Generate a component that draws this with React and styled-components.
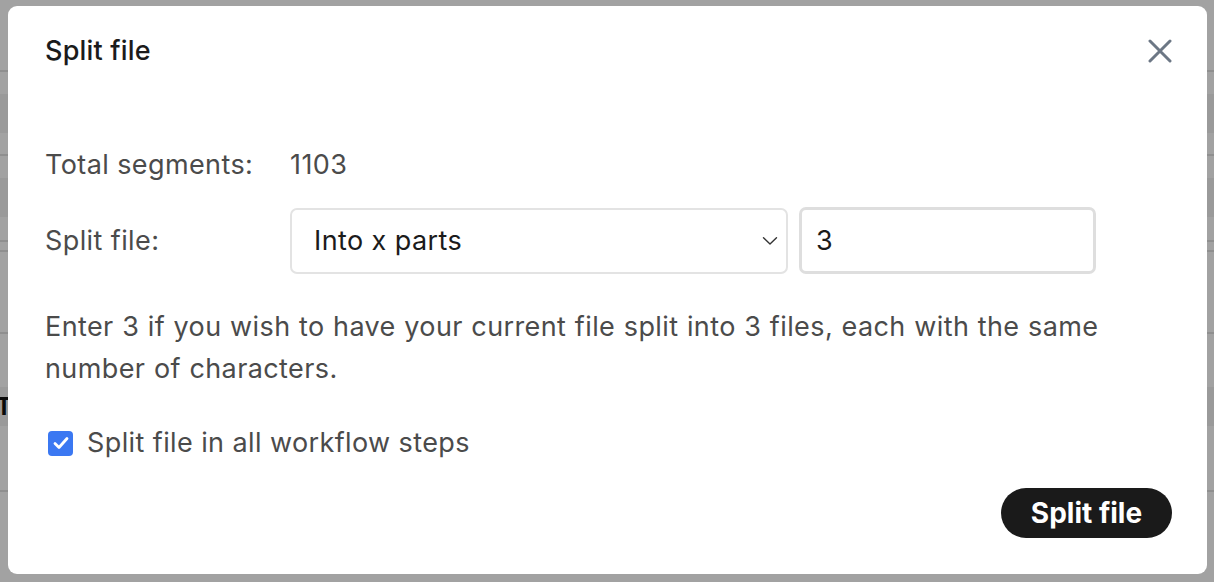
import React from "react";
import styled, { createGlobalStyle } from "styled-components";

const GlobalStyle = createGlobalStyle`
  html, body {
    margin: 0;
    padding: 0;
    height: 100%;
    overflow: hidden;
    font-family: Inter, "Noto Sans", Arial, sans-serif;
  }
`;

const rows = [
  { h: 70, shade: false },
  { h: 2, line: true },
  { h: 22, shade: false },
  { h: 39, shade: true },
  { h: 21, shade: false },
  { h: 2, line: true },
  { h: 22, shade: false },
  { h: 39, shade: true },
  { h: 23, shade: false },
  { h: 2, line: true },
  { h: 8, shade: false },
  { h: 2, line: true },
  { h: 80, shade: false },
  { h: 2, line: true },
  { h: 53, shade: false },
  { h: 39, shade: true, letter: "T" },
  { h: 64, shade: false },
  { h: 2, line: true },
];

const SplitFileModal = () => {
  return (
    <>
      <GlobalStyle />
      <Page>
        {rows.map((r, i) => (
          <PageRow key={i} $h={r.h} $shade={r.shade} $line={r.line}>
            {r.letter && <RowLetter>{r.letter}</RowLetter>}
          </PageRow>
        ))}
      </Page>
      <Backdrop />
      <Dialog role="dialog">
        <Header>
          <Title>Split file</Title>
          <CloseButton aria-label="Close">
            <svg width="24" height="24" viewBox="0 0 24 24" fill="none">
              <path
                d="M2 2 L22 22 M22 2 L2 22"
                stroke="#6c7785"
                strokeWidth="3"
                strokeLinecap="round"
              />
            </svg>
          </CloseButton>
        </Header>

        <Body>
          <FieldRow>
            <Label>Total segments:</Label>
            <Value>1103</Value>
          </FieldRow>

          <FieldRow $top={22}>
            <Label>Split file:</Label>
            <Controls>
              <SelectBox>
                <span>Into x parts</span>
                <svg width="16" height="10" viewBox="0 0 16 10" fill="none">
                  <path
                    d="M1.5 1.8 L8 8 L14.5 1.8"
                    stroke="#333"
                    strokeWidth="1.4"
                    strokeLinecap="round"
                    strokeLinejoin="round"
                  />
                </svg>
              </SelectBox>
              <NumberInput type="text" defaultValue="3" />
            </Controls>
          </FieldRow>

          <Hint>
            Enter 3 if you wish to have your current file split into 3 files,
            each with the same number of characters.
          </Hint>

          <CheckRow>
            <CheckBox>
              <svg width="16" height="14" viewBox="0 0 16 14" fill="none">
                <path
                  d="M2 7.5 L6 11.5 L14 2.5"
                  stroke="#fff"
                  strokeWidth="2.8"
                  strokeLinecap="round"
                  strokeLinejoin="round"
                />
              </svg>
            </CheckBox>
            <span>Split file in all workflow steps</span>
          </CheckRow>
        </Body>

        <Footer>
          <PrimaryButton>Split file</PrimaryButton>
        </Footer>
      </Dialog>
    </>
  );
};

const Page = styled.div`
  display: flex;
  flex-direction: column;
  height: 100vh;
  background: #fff;
`;

const PageRow = styled.div`
  height: ${(p) => p.$h}px;
  flex-shrink: 0;
  background: ${(p) => (p.$line ? "#e2e2e2" : p.$shade ? "#f2f2f2" : "#fff")};
  display: flex;
  align-items: center;
`;

const RowLetter = styled.span`
  font-weight: 700;
  font-size: 24px;
  color: #111;
  margin-left: -4px;
`;

const Backdrop = styled.div`
  position: fixed;
  inset: 0;
  background: rgba(0, 0, 0, 0.365);
`;

const Dialog = styled.div`
  position: fixed;
  left: 8px;
  top: 6px;
  width: 1199px;
  height: 568px;
  box-sizing: border-box;
  background: #fff;
  border-radius: 9px;
  padding: 0 35px 36px 37px;
  display: flex;
  flex-direction: column;
  color: #4b4b4b;
  letter-spacing: 0.4px;
`;

const Header = styled.div`
  display: flex;
  align-items: center;
  justify-content: space-between;
  padding-top: 30px;
  height: 30px;
`;

const Title = styled.h2`
  margin: 0;
  font-size: 27px;
  line-height: 30px;
  font-weight: 500;
  color: #1b1b1b;
  letter-spacing: 0.2px;
`;

const CloseButton = styled.button`
  border: 0;
  background: none;
  padding: 0;
  display: flex;
  cursor: pointer;
`;

const Body = styled.div`
  margin-top: 78px;
  font-size: 27px;
  line-height: 42px;
`;

const FieldRow = styled.div`
  display: flex;
  align-items: center;
  margin-top: ${(p) => p.$top || 0}px;
`;

const Label = styled.div`
  width: 245px;
  flex-shrink: 0;
`;

const Value = styled.div``;

const Controls = styled.div`
  display: flex;
  gap: 11px;
`;

const SelectBox = styled.div`
  width: 498px;
  height: 66px;
  box-sizing: border-box;
  border: 2px solid #e3e3e3;
  border-radius: 7px;
  display: flex;
  align-items: center;
  justify-content: space-between;
  padding: 0 8px 0 22px;
  color: #1b1b1b;
`;

const NumberInput = styled.input`
  width: 297px;
  height: 67px;
  box-sizing: border-box;
  border: 3px solid #dedede;
  border-radius: 7px;
  padding: 0 14px;
  font-family: inherit;
  font-size: 27px;
  letter-spacing: 0.3px;
  color: #1b1b1b;
  outline: none;
  margin-top: -1px;
`;

const Hint = styled.p`
  margin: 32px 0 0;
  word-spacing: 0.5px;
`;

const CheckRow = styled.label`
  display: flex;
  align-items: center;
  gap: 14px;
  margin-top: 32px;
  padding-left: 3px;
`;

const CheckBox = styled.span`
  width: 25px;
  height: 25px;
  border-radius: 4px;
  background: #3b78f2;
  display: flex;
  align-items: center;
  justify-content: center;
`;

const Footer = styled.div`
  margin-top: auto;
  display: flex;
  justify-content: flex-end;
`;

const PrimaryButton = styled.button`
  width: 171px;
  height: 50px;
  border: 0;
  border-radius: 25px;
  background: #1a1a1a;
  color: #fff;
  font-family: inherit;
  font-size: 28px;
  font-weight: 700;
  cursor: pointer;
`;

export default SplitFileModal;
